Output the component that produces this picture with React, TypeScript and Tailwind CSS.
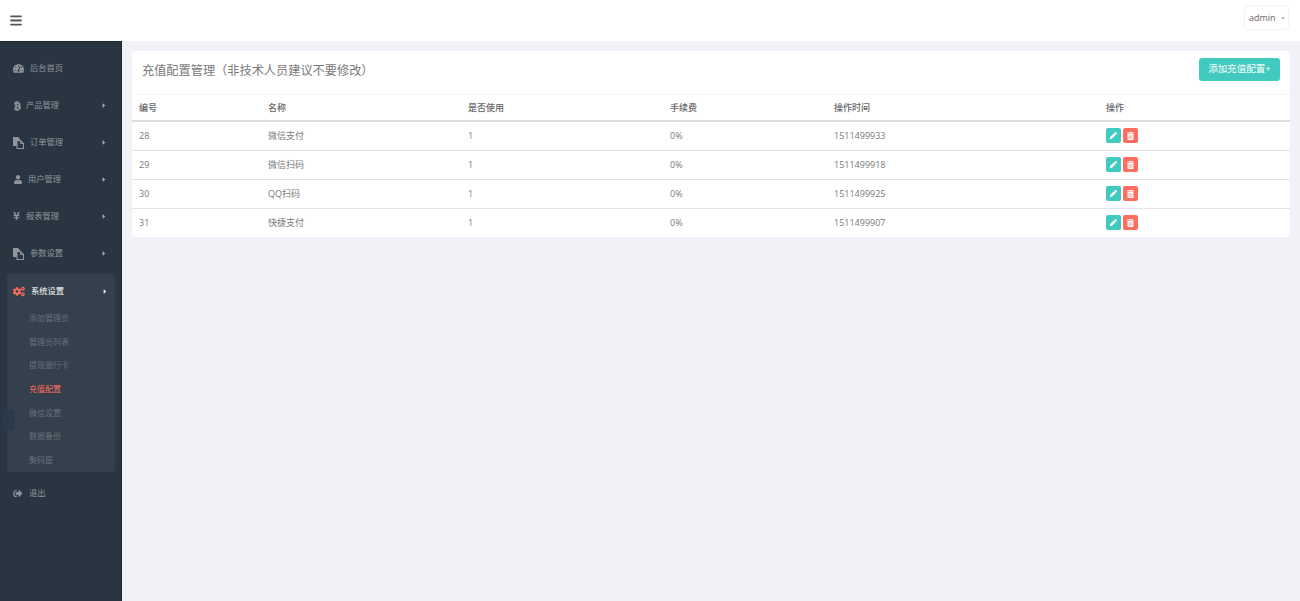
import {
  FaBars,
  FaBtc,
  FaCaretDown,
  FaCaretRight,
  FaCogs,
  FaPen,
  FaSignOutAlt,
  FaTachometerAlt,
  FaTrashAlt,
  FaUser,
  FaYenSign,
} from "react-icons/fa";
import type { ComponentType } from "react";

type MenuItem = {
  label: string;
  icon: ComponentType<{ className?: string }>;
  iconClass: string;
  textClass: string;
  arrow?: boolean;
};

// fa-files-o look: solid sheet behind, outlined sheet in front
const FilesIcon = ({ className }: { className?: string }) => (
  <svg viewBox="0 0 11 12" className={className}>
    <path d="M0 0h5l2 2v7H0z" fill="currentColor" />
    <path d="M4 3.5h3.5l3 3v5H4z" fill="#2a3542" stroke="currentColor" strokeWidth="1.1" />
    <path d="M7.5 3.5v3h3" fill="none" stroke="currentColor" strokeWidth="1" />
  </svg>
);

const menu: MenuItem[] = [
  { label: "后台首页", icon: FaTachometerAlt, iconClass: "w-[11px] h-[11px]", textClass: "ml-[6px]" },
  { label: "产品管理", icon: FaBtc, iconClass: "w-[7px] h-[10px] ml-[1px] stroke-[30px]", textClass: "ml-[5px]", arrow: true },
  { label: "订单管理", icon: FilesIcon, iconClass: "w-[11px] h-[12px]", textClass: "ml-[6px]", arrow: true },
  { label: "用户管理", icon: FaUser, iconClass: "w-[8px] h-[9px] ml-[1px]", textClass: "ml-[6px]", arrow: true },
  { label: "报表管理", icon: FaYenSign, iconClass: "w-[7px] h-[10px] -mt-[2px]", textClass: "ml-[6px]", arrow: true },
  { label: "参数设置", icon: FilesIcon, iconClass: "w-[11px] h-[12px]", textClass: "ml-[6px]", arrow: true },
];

const subMenu = ["添加管理员", "管理员列表", "提现银行卡", "充值配置", "微信设置", "数据备份", "聚码屋"];

const rows = [
  { id: 28, name: "微信支付", time: "1511499933" },
  { id: 29, name: "微信扫码", time: "1511499918" },
  { id: 30, name: "QQ扫码", time: "1511499925" },
  { id: 31, name: "快捷支付", time: "1511499907" },
];

const SideItem = ({ item }: { item: MenuItem }) => {
  const Icon = item.icon;
  return (
    <a className="flex items-center h-[37px] pl-[13px] pr-[14px] text-[#8f959c]">
      <Icon className={item.iconClass} />
      <span className={item.textClass}>{item.label}</span>
      {item.arrow && <FaCaretRight className="ml-auto w-[6px] h-[7px] text-[#aeb2b7]" />}
    </a>
  );
};

export default function App() {
  return (
    <div
      className="w-[1300px] h-[601px] overflow-hidden bg-[#f1f2f7] flex flex-col text-[#797979]"
      style={{ fontFamily: '"Open Sans", "Noto Sans CJK SC", sans-serif' }}
    >
      <header className="h-[41px] shrink-0 bg-white flex items-center justify-between pl-[10px] pr-[11px]">
        <FaBars className="w-[12px] h-[13px] text-[#555]" />
        <div className="flex items-center w-[45px] h-[25px] pl-[4px] mb-[6px] rounded border border-[#f3f3f3] text-[9px] text-[#666]">
          admin
          <FaCaretDown className="ml-[4px] w-[6px] h-[6px] text-[#aaa]" />
        </div>
      </header>

      <div className="flex flex-1 min-h-0">
        <aside className="relative w-[122px] shrink-0 bg-[#2a3542] border-r border-[#1f2933] border-t text-[8.25px] pt-[8px]">
          {menu.map((item) => (
            <SideItem key={item.label} item={item} />
          ))}

          <div className="ml-[7px] mr-[6px] mt-[2px] h-[198px] bg-[#35404d] rounded-sm">
            <a className="flex items-center h-[34px] pl-[6px] pr-[7px] text-white">
              <FaCogs className="w-[12px] h-[11px] text-[#ff6c60]" />
              <span className="ml-[6px]">系统设置</span>
              <FaCaretRight className="ml-auto w-[6px] h-[7px]" />
            </a>
            <ul className="-mt-[2px] text-[8px]">
              {subMenu.map((label) => (
                <li
                  key={label}
                  className={`h-[23.7px] leading-[23.7px] pl-[22px] ${
                    label === "充值配置" ? "text-[#ff6c60]" : "text-[#67707b]"
                  }`}
                >
                  {label}
                </li>
              ))}
            </ul>
          </div>

          <a className="flex items-center h-[37px] mt-[3px] pl-[13px] text-[#8f959c]">
            <FaSignOutAlt className="w-[10px] h-[9px]" />
            <span className="ml-[6px]">退出</span>
          </a>

          {/* faint leftover square over the sidebar */}
          <div className="absolute left-[3px] top-[368px] w-[12px] h-[20px] bg-[#2c394a]" />
        </aside>

        <main className="flex-1 pt-[10px] pl-[10px] pr-[10px]">
          <section className="bg-white rounded-sm">
            <div className="h-[44px] flex justify-between pl-[10px] pr-[10px] pt-[7px] border-b border-[#f5f5f5]">
              <h2 className="text-[12.2px] leading-[24px] mt-[1px] text-[#797979]">充值配置管理（非技术人员建议不要修改）</h2>
              <a className="flex items-center justify-center w-[81px] h-[23px] rounded-[3px] bg-[#41cac0] text-white text-[9.5px]">
                添加充值配置+
              </a>
            </div>

            <table className="w-full table-fixed text-[9px]">
              <colgroup>
                <col className="w-[136px]" />
                <col className="w-[200px]" />
                <col className="w-[202px]" />
                <col className="w-[164px]" />
                <col className="w-[272px]" />
                <col />
              </colgroup>
              <thead>
                <tr className="h-[26px] border-b-2 border-[#dddddd] text-left text-[#666]">
                  <th className="pl-[7px] font-medium">编号</th>
                  <th className="font-medium">名称</th>
                  <th className="font-medium">是否使用</th>
                  <th className="font-medium">手续费</th>
                  <th className="font-medium">操作时间</th>
                  <th className="font-medium">操作</th>
                </tr>
              </thead>
              <tbody>
                {rows.map((row, i) => (
                  <tr key={row.id} className={`h-[29px] ${i < rows.length - 1 ? "border-b border-[#e3e3e3]" : ""}`}>
                    <td className="pl-[7px]">{row.id}</td>
                    <td>{row.name}</td>
                    <td>1</td>
                    <td>0%</td>
                    <td>{row.time}</td>
                    <td>
                      <div className="flex gap-[2px]">
                        <span className="w-[15px] h-[15px] rounded-[2px] bg-[#41cac0] flex items-center justify-center text-white">
                          <FaPen className="w-[7px] h-[7px]" />
                        </span>
                        <span className="w-[15px] h-[15px] rounded-[2px] bg-[#ff6c60] flex items-center justify-center text-white">
                          <FaTrashAlt className="w-[7px] h-[8px]" />
                        </span>
                      </div>
                    </td>
                  </tr>
                ))}
              </tbody>
            </table>
          </section>
        </main>
      </div>
    </div>
  );
}
